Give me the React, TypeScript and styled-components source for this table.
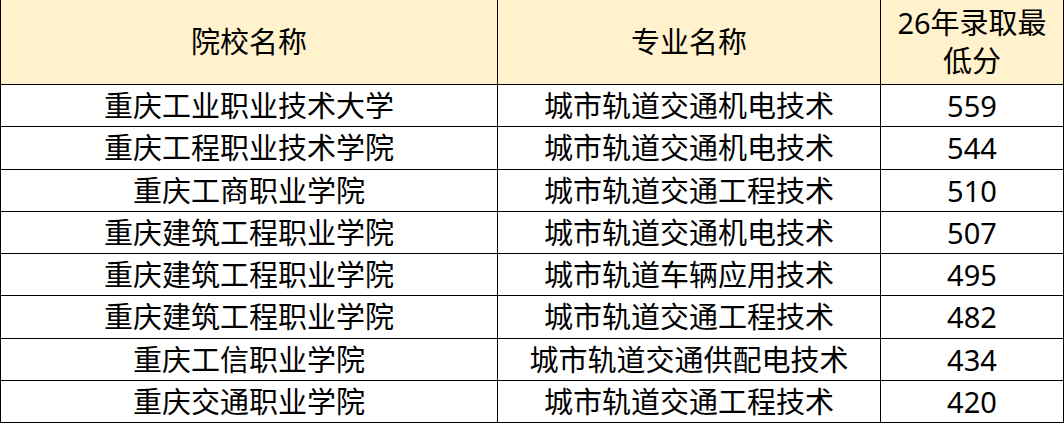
import { createGlobalStyle, styled } from 'styled-components'

const GlobalStyle = createGlobalStyle`
  html, body {
    margin: 0;
    padding: 0;
    background: #ffffff;
  }
  body {
    font-family: 'Noto Sans', 'Noto Sans CJK SC', sans-serif;
  }
`

const Sheet = styled.div`
  display: grid;
  grid-template-columns: 497px 383px 1fr;
  grid-template-rows: 85px repeat(8, 1fr);
  width: 1064px;
  height: 423px;
  box-sizing: border-box;
  border-left: 1px solid #000;
`

const Cell = styled.div<{ $head?: boolean }>`
  display: flex;
  align-items: center;
  justify-content: center;
  text-align: center;
  box-sizing: border-box;
  border-right: 1px solid #000;
  border-bottom: 1px solid #000;
  background: ${(p) => (p.$head ? '#fff2cc' : '#ffffff')};
  color: #000;
  font-size: 29px;
  line-height: ${(p) => (p.$head ? '38px' : '41px')};
  white-space: nowrap;
`

const rows = [
  ['重庆工业职业技术大学', '城市轨道交通机电技术', '559'],
  ['重庆工程职业技术学院', '城市轨道交通机电技术', '544'],
  ['重庆工商职业学院', '城市轨道交通工程技术', '510'],
  ['重庆建筑工程职业学院', '城市轨道交通机电技术', '507'],
  ['重庆建筑工程职业学院', '城市轨道车辆应用技术', '495'],
  ['重庆建筑工程职业学院', '城市轨道交通工程技术', '482'],
  ['重庆工信职业学院', '城市轨道交通供配电技术', '434'],
  ['重庆交通职业学院', '城市轨道交通工程技术', '420'],
]

export default function App() {
  return (
    <>
      <GlobalStyle />
      <Sheet>
        <Cell $head>院校名称</Cell>
        <Cell $head>专业名称</Cell>
        <Cell $head>
          26年录取最
          <br />
          低分
        </Cell>
        {rows.map((r, i) =>
          r.map((v, j) => <Cell key={`${i}-${j}`}>{v}</Cell>)
        )}
      </Sheet>
    </>
  )
}
